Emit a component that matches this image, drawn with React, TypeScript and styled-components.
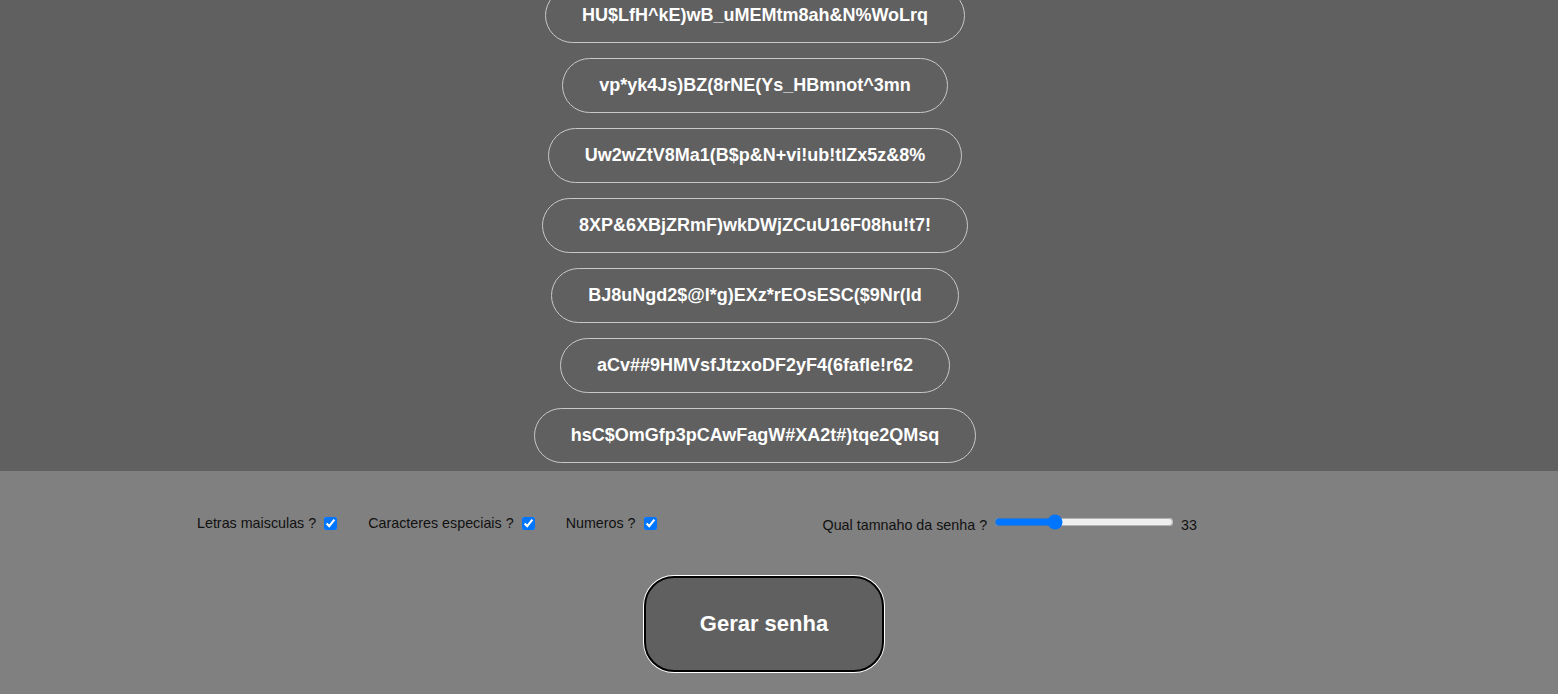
import React, { useState } from "react";
import styled, { createGlobalStyle } from "styled-components";

const Global = createGlobalStyle`
  html, body { margin: 0; padding: 0; }
  body { font-family: "Liberation Sans", Arial, sans-serif; background: #808080; overflow: hidden; }
`;

const Page = styled.div`
  display: flex;
  flex-direction: column;
  width: 1558px;
  height: 694px;
`;

const Results = styled.section`
  height: 471px;
  flex: none;
  background: #606060;
  display: flex;
  flex-direction: column;
  align-items: center;
  justify-content: flex-end;
  gap: 15px;
  padding: 0 48px 8px 0;
  box-sizing: border-box;
  overflow: hidden;
`;

const Pill = styled.div`
  flex: none;
  border: 1px solid #c8c8c8;
  border-radius: 28px;
  padding: 16px 36px;
  color: #fff;
  font-size: 18px;
  font-weight: bold;
  line-height: 21px;
  white-space: nowrap;
`;

const Controls = styled.section`
  flex: 1;
  background: #808080;
  display: flex;
  flex-direction: column;
`;

const Options = styled.div`
  display: flex;
  align-items: center;
  padding: 43px 0 0 197px;
  height: 18px;
  font-size: 14.3px;
  color: #111;
`;

const Option = styled.label`
  display: flex;
  align-items: center;
  gap: 8px;
  margin-right: 31px;
`;

const Check = styled.input`
  width: 13px;
  height: 13px;
  margin: 0;
  accent-color: #0075ff;
`;

const SizeGroup = styled.div`
  display: flex;
  align-items: center;
  margin-left: 135px;
  gap: 7px;
  padding-top: 4px;
`;

const Range = styled.input`
  width: 180px;
  margin: 0 0 6px;
  accent-color: #0075ff;
`;

const ButtonRow = styled.div`
  display: flex;
  justify-content: center;
  padding: 44px 30px 0 0;
`;

const Generate = styled.button`
  width: 240px;
  height: 96px;
  border: 2px solid #000;
  box-shadow: 0 0 0 1px #fff;
  border-radius: 30px;
  background: #606060;
  color: #fff;
  font-family: "Liberation Sans", Arial, sans-serif;
  font-size: 22px;
  font-weight: bold;
  cursor: pointer;
`;

const passwords = [
  "HU$LfH^kE)wB_uMEMtm8ah&N%WoLrq",
  "vp*yk4Js)BZ(8rNE(Ys_HBmnot^3mn",
  "Uw2wZtV8Ma1(B$p&N+vi!ub!tlZx5z&8%",
  "8XP&6XBjZRmF)wkDWjZCuU16F08hu!t7!",
  "BJ8uNgd2$@l*g)EXz*rEOsESC($9Nr(ld",
  "aCv##9HMVsfJtzxoDF2yF4(6fafle!r62",
  "hsC$OmGfp3pCAwFagW#XA2t#)tqe2QMsq",
];

export default function App() {
  const [size, setSize] = useState(33);
  return (
    <Page>
      <Global />
      <Results>
        {passwords.map((p) => (
          <Pill key={p}>{p}</Pill>
        ))}
      </Results>
      <Controls>
        <Options>
          <Option>
            Letras maisculas ? <Check type="checkbox" defaultChecked />
          </Option>
          <Option>
            Caracteres especiais ? <Check type="checkbox" defaultChecked />
          </Option>
          <Option>
            Numeros ? <Check type="checkbox" defaultChecked />
          </Option>
          <SizeGroup>
            Qual tamnaho da senha ?
            <Range
              type="range"
              min={1}
              max={100}
              value={size}
              onChange={(e) => setSize(Number(e.target.value))}
            />
            {size}
          </SizeGroup>
        </Options>
        <ButtonRow>
          <Generate>Gerar senha</Generate>
        </ButtonRow>
      </Controls>
    </Page>
  );
}
